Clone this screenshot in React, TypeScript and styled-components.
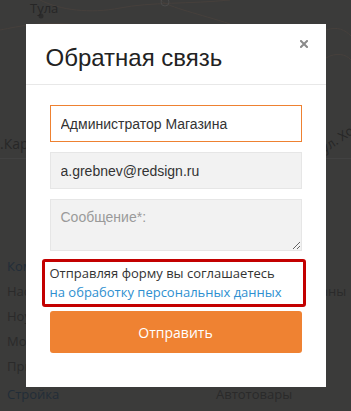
import React from "react";
import styled, { createGlobalStyle } from "styled-components";

const GlobalStyle = createGlobalStyle`
  html, body {
    margin: 0;
    padding: 0;
    background: #3b3b3a;
    overflow: hidden;
  }
  * {
    box-sizing: border-box;
  }
`;

const Backdrop = styled.div`
  width: 351px;
  height: 411px;
  background: #3b3b3a;
  font-family: "Open Sans", "Liberation Sans", sans-serif;
  overflow: hidden;
`;

const MapArea = styled.div`
  position: relative;
  height: 128px;
`;

const MapLines = styled.svg`
  position: absolute;
  inset: 0;
`;

const MapLabel = styled.span<{ $rotate?: number }>`
  position: absolute;
  font-size: 13px;
  color: #262626;
  transform: rotate(${(p) => p.$rotate || 0}deg);
  transform-origin: left center;
  white-space: nowrap;
`;

const TabBar = styled.div`
  height: 31px;
  display: flex;
  align-items: center;
  border-bottom: 1px solid #424242;
  font-size: 14px;
  color: #272727;
`;

const Categories = styled.div`
  display: grid;
  grid-template-columns: 209px 1fr;
  grid-auto-rows: 25px;
  padding: 94px 0 0 7px;
  font-size: 13px;
  color: #2a2a2a;
  white-space: nowrap;
`;

const Category = styled.div<{ $head?: boolean; $gap?: boolean }>`
  display: flex;
  align-items: center;
  color: ${(p) => (p.$head ? "#222d38" : "#2a2a2a")};
  margin-top: ${(p) => (p.$gap ? "7px" : "0")};
`;

const Overlay = styled.div`
  position: fixed;
  inset: 0;
  display: flex;
  justify-content: center;
  align-items: flex-start;
`;

const Modal = styled.div`
  position: relative;
  width: 300px;
  margin-top: 24px;
  background: #fff;
`;

const Header = styled.div`
  height: 61px;
  padding: 7px 20px 0;
  display: flex;
  align-items: center;
  border-bottom: 1px solid #e8e8e8;
`;

const Title = styled.h2`
  margin: 0;
  font-family: "Liberation Sans", Arial, sans-serif;
  font-size: 24px;
  font-weight: normal;
  color: #222;
`;

const CloseButton = styled.button`
  position: absolute;
  top: 16px;
  right: 18px;
  width: 8px;
  height: 8px;
  padding: 0;
  border: none;
  background: none;
  display: flex;
  cursor: pointer;
`;

const Body = styled.form`
  padding: 20px 24px 34px;
  display: flex;
  flex-direction: column;
`;

const Fields = styled.div`
  display: flex;
  flex-direction: column;
  gap: 10px;
`;

const Input = styled.input<{ $active?: boolean }>`
  height: 37px;
  width: 100%;
  padding: 0 10px;
  font-family: "Liberation Sans", Arial, sans-serif;
  font-size: 14px;
  color: #333;
  background: ${(p) => (p.$active ? "#fff" : "#f2f2f2")};
  border: 1px solid ${(p) => (p.$active ? "#ee8131" : "#e6e6e6")};
  border-radius: 0;
  outline: none;
`;

const TextArea = styled.textarea`
  height: 52px;
  width: 100%;
  padding: 9px 10px;
  font-family: "Liberation Sans", Arial, sans-serif;
  font-size: 14px;
  color: #333;
  background: #f2f2f2;
  border: 1px solid #e6e6e6;
  border-radius: 0;
  outline: none;
  &::placeholder {
    color: #9a9a9a;
  }
`;

const Agreement = styled.div`
  margin: 8px -4px 4px -8px;
  padding: 2px 5px;
  border: 3px solid #c30000;
  border-radius: 3px;
  font-family: "Open Sans", sans-serif;
  font-size: 13px;
  line-height: 19px;
  color: #333;
`;

const AgreementLink = styled.a`
  color: #2d8fd0;
  text-decoration: none;
`;

const SubmitButton = styled.button`
  height: 42px;
  width: 100%;
  border: none;
  border-radius: 3px;
  background: #ef8232;
  color: #fff;
  font-family: "Open Sans", sans-serif;
  font-size: 14px;
  cursor: pointer;
`;

export default function App() {
  return (
    <>
      <GlobalStyle />
      <Backdrop>
        <MapArea>
          <MapLines width="351" height="128" viewBox="0 0 351 128">
            <g fill="none" stroke="#46403c" strokeWidth="1">
              <path d="M40 0 C 60 10, 90 14, 120 8 S 190 4, 230 0" />
              <path d="M160 0 C 170 8, 200 14, 230 24" />
              <path d="M0 30 C 20 26, 40 22, 70 24" />
              <path d="M326 30 C 338 26, 345 30, 351 36" />
              <path d="M326 58 C 336 52, 346 54, 351 60" />
            </g>
            <circle cx="165" cy="2" r="4" fill="none" stroke="#4a4a4a" />
            <circle cx="41" cy="16" r="2.5" fill="#2c2c2c" />
          </MapLines>
          <MapLabel style={{ left: 30, top: -1 }}>Тула</MapLabel>
          <MapLabel $rotate={-34} style={{ left: 322, top: 140 }}>
            ул. Холодная
          </MapLabel>
        </MapArea>
        <TabBar>.Карта</TabBar>
        <Categories>
          <Category $head>Компьютеры</Category>
          <Category />
          <Category>Настольные ПК</Category>
          <Category>Телевизоры, экраны</Category>
          <Category>Ноутбуки</Category>
          <Category />
          <Category>Мониторы</Category>
          <Category />
          <Category>Принтеры</Category>
          <Category />
          <Category $head $gap>
            Стройка
          </Category>
          <Category $gap>Автотовары</Category>
        </Categories>
      </Backdrop>
      <Overlay>
        <Modal>
          <Header>
            <Title>Обратная связь</Title>
          </Header>
          <CloseButton type="button" aria-label="Закрыть">
            <svg width="8" height="8" viewBox="0 0 8 8">
              <path
                d="M1 1 L7 7 M7 1 L1 7"
                stroke="#8a8a8a"
                strokeWidth="2"
                strokeLinecap="square"
              />
            </svg>
          </CloseButton>
          <Body onSubmit={(e) => e.preventDefault()}>
            <Fields>
              <Input $active defaultValue="Администратор Магазина" />
              <Input defaultValue="a.grebnev@redsign.ru" />
              <TextArea placeholder="Сообщение*:" />
            </Fields>
            <Agreement>
              Отправляя форму вы соглашаетесь
              <br />
              <AgreementLink href="#">на обработку персональных данных</AgreementLink>
            </Agreement>
            <SubmitButton type="submit">Отправить</SubmitButton>
          </Body>
        </Modal>
      </Overlay>
    </>
  );
}
